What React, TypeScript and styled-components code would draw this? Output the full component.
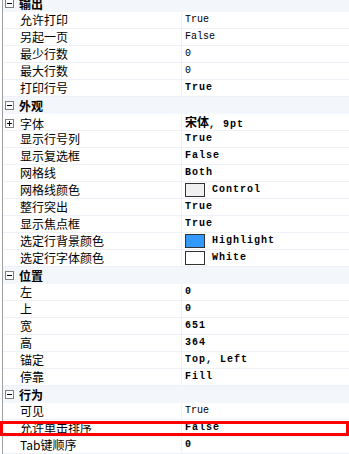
import styled, { createGlobalStyle } from "styled-components";

const GlobalStyle = createGlobalStyle`
  html, body {
    margin: 0;
    padding: 0;
    background: #ffffff;
    overflow: hidden;
  }
`;

const Viewport = styled.div`
  width: 349px;
  height: 454px;
  overflow: hidden;
  background: #ffffff;
`;

const Grid = styled.div`
  margin-top: -5px;
  margin-left: 2px;
  border-left: 1px solid #a0a0a0;
  font-family: "Noto Sans CJK SC", "Liberation Sans", sans-serif;
  font-size: 12px;
  color: #000000;
`;

const CategoryRow = styled.div`
  display: flex;
  align-items: center;
  height: 17px;
  background: #f3f6fb;
`;

const Toggle = styled.span`
  box-sizing: border-box;
  width: 9px;
  height: 9px;
  margin: 0 5px 0 2px;
  border: 1px solid #808080;
  position: relative;
  flex-shrink: 0;
  background: #ffffff;

  &::before,
  &::after {
    content: "";
    position: absolute;
    background: #000000;
  }
  &::before {
    left: 1px;
    right: 1px;
    top: 3px;
    height: 1px;
  }
  &::after {
    display: ${(p: { $open: boolean }) => (p.$open ? "none" : "block")};
    top: 1px;
    bottom: 1px;
    left: 3px;
    width: 1px;
  }
`;

const CategoryLabel = styled.span`
  font-weight: bold;
  line-height: 17px;
`;

const ItemRow = styled.div<{ $marked?: boolean }>`
  position: relative;
  display: grid;
  grid-template-columns: 179px 1fr;
  height: 17px;
  box-sizing: border-box;
  border-bottom: 1px solid #eef2f8;
`;

const Marker = styled.span`
  position: absolute;
  left: -3px;
  right: 0;
  top: 1px;
  bottom: 0;
  border: 3px solid #ff0000;
  pointer-events: none;
`;

const NameCell = styled.div`
  display: flex;
  align-items: center;
  border-right: 1px solid #eef2f8;
  white-space: nowrap;
  line-height: 16px;
`;

const Gutter = styled.span`
  width: 17px;
  display: flex;
  align-items: center;
  flex-shrink: 0;
`;

const ValueCell = styled.div<{ $bold?: boolean }>`
  display: flex;
  align-items: center;
  gap: 7px;
  padding-left: 3px;
  white-space: nowrap;
  font-family: "Liberation Mono", "Noto Sans CJK SC", monospace;
  font-size: 10px;
  line-height: 16px;
  font-weight: ${(p) => (p.$bold ? "bold" : "normal")};
  letter-spacing: ${(p) => (p.$bold ? "1px" : "0")};
`;

const Cjk = styled.span`
  font-family: "Noto Sans CJK SC", sans-serif;
  font-size: 12px;
  letter-spacing: 0;
`;

const Swatch = styled.span<{ $color: string }>`
  box-sizing: border-box;
  width: 20px;
  height: 14px;
  border: 1px solid #333333;
  background: ${(p) => p.$color};
  flex-shrink: 0;
`;

type Item = {
  name: string;
  value: string;
  bold?: boolean;
  color?: string;
  expandable?: boolean;
  marked?: boolean;
  cjkValue?: string;
};

type Category = { title: string; items: Item[] };

const data: Category[] = [
  {
    title: "输出",
    items: [
      { name: "允许打印", value: "True" },
      { name: "另起一页", value: "False" },
      { name: "最少行数", value: "0" },
      { name: "最大行数", value: "0" },
      { name: "打印行号", value: "True", bold: true },
    ],
  },
  {
    title: "外观",
    items: [
      { name: "字体", value: ", 9pt", cjkValue: "宋体", bold: true, expandable: true },
      { name: "显示行号列", value: "True", bold: true },
      { name: "显示复选框", value: "False", bold: true },
      { name: "网格线", value: "Both", bold: true },
      { name: "网格线颜色", value: "Control", bold: true, color: "#f0f0f0" },
      { name: "整行突出", value: "True", bold: true },
      { name: "显示焦点框", value: "True", bold: true },
      { name: "选定行背景颜色", value: "Highlight", bold: true, color: "#3399ff" },
      { name: "选定行字体颜色", value: "White", bold: true, color: "#ffffff" },
    ],
  },
  {
    title: "位置",
    items: [
      { name: "左", value: "0", bold: true },
      { name: "上", value: "0", bold: true },
      { name: "宽", value: "651", bold: true },
      { name: "高", value: "364", bold: true },
      { name: "锚定", value: "Top, Left", bold: true },
      { name: "停靠", value: "Fill", bold: true },
    ],
  },
  {
    title: "行为",
    items: [
      { name: "可见", value: "True" },
      { name: "允许单击排序", value: "False", bold: true, marked: true },
      { name: "Tab键顺序", value: "0", bold: true },
    ],
  },
];

function PropertyRow({ item }: { item: Item }) {
  return (
    <ItemRow>
      <NameCell>
        <Gutter>{item.expandable && <Toggle $open={false} />}</Gutter>
        {item.name}
      </NameCell>
      <ValueCell $bold={item.bold}>
        {item.color && <Swatch $color={item.color} />}
        <span>
          {item.cjkValue && <Cjk>{item.cjkValue}</Cjk>}
          {item.value}
        </span>
      </ValueCell>
      {item.marked && <Marker />}
    </ItemRow>
  );
}

export default function App() {
  return (
    <Viewport>
      <GlobalStyle />
      <Grid>
        {data.map((cat) => (
          <div key={cat.title}>
            <CategoryRow>
              <Toggle $open={true} />
              <CategoryLabel>{cat.title}</CategoryLabel>
            </CategoryRow>
            {cat.items.map((item) => (
              <PropertyRow key={item.name} item={item} />
            ))}
          </div>
        ))}
      </Grid>
    </Viewport>
  );
}
